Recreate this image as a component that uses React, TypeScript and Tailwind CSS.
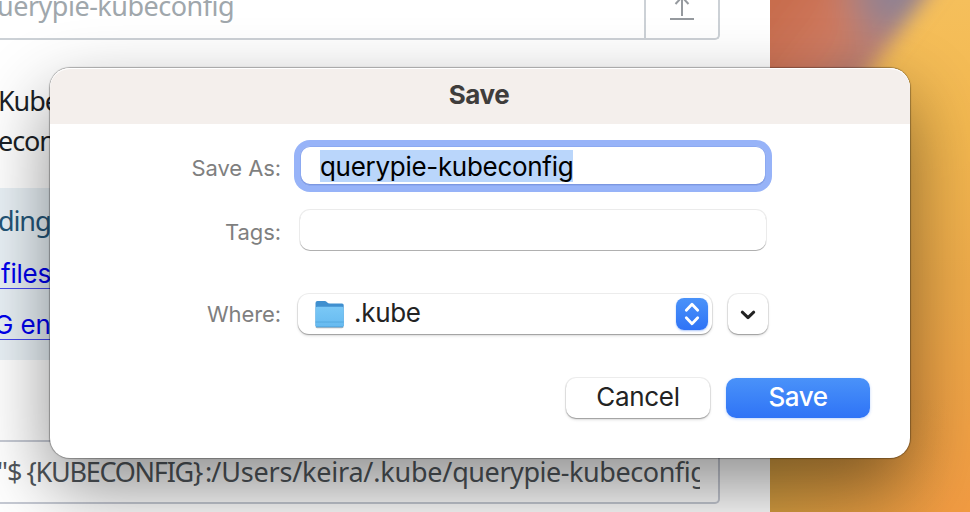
import React from "react";

function Wallpaper() {
  return (
    <svg className="absolute inset-0 h-full w-full" viewBox="0 0 970 512" aria-hidden="true">
      <defs>
        <linearGradient id="amber" x1="0" y1="0" x2="0" y2="1">
          <stop offset="0" stopColor="#f5bf5b" />
          <stop offset="0.25" stopColor="#f3b850" />
          <stop offset="0.55" stopColor="#eeab4a" />
          <stop offset="1" stopColor="#f19b42" />
        </linearGradient>
        <linearGradient id="ochre" x1="770" y1="0" x2="950" y2="0" gradientUnits="userSpaceOnUse">
          <stop offset="0" stopColor="#d49c40" />
          <stop offset="1" stopColor="#d49c40" stopOpacity="0" />
        </linearGradient>
        <linearGradient id="clay" x1="770" y1="20" x2="862" y2="91" gradientUnits="userSpaceOnUse">
          <stop offset="0" stopColor="#c86d4e" />
          <stop offset="0.5" stopColor="#cf7a60" />
          <stop offset="0.8" stopColor="#bf7f70" />
          <stop offset="1" stopColor="#b9857c" />
        </linearGradient>
        <radialGradient id="plum" cx="895" cy="-8" r="72" gradientUnits="userSpaceOnUse">
          <stop offset="0" stopColor="#8b8296" />
          <stop offset="0.4" stopColor="#948290" stopOpacity="0.8" />
          <stop offset="1" stopColor="#b9857c" stopOpacity="0" />
        </radialGradient>
        <filter id="soft" x="-20%" y="-20%" width="140%" height="140%">
          <feGaussianBlur stdDeviation="10" />
        </filter>
      </defs>
      <rect width="970" height="512" fill="url(#amber)" />
      <rect y="400" width="970" height="112" fill="url(#ochre)" />
      <g filter="url(#soft)">
        <path d="M700 -60 H967 L923 0 L876 62 L836 120 H700 Z" fill="url(#clay)" />
        <path d="M700 -60 H967 L923 0 L876 62 L836 120 H700 Z" fill="url(#plum)" />
      </g>
    </svg>
  );
}

function BrowserPage() {
  return (
    <div className="relative flex h-[512px] w-[770px] flex-col overflow-hidden bg-white font-['Noto_Sans',sans-serif] text-[27px] whitespace-nowrap">
      <div className="flex h-10 w-[720px] shrink-0 rounded-br-[5px] border-r-2 border-b-2 border-[#ccd1d6]">
        <div className="h-[38px] flex-1 overflow-hidden leading-[38px] tracking-[-0.5px] text-[#a0a7ac]">
          <div className="-mt-[13px] -ml-[3px]">uerypie-kubeconfig</div>
        </div>
        <div className="flex w-[74px] justify-center border-l-2 border-[#ccd1d6]">
          <svg className="h-[38px] w-9" viewBox="0 0 36 38" fill="none" stroke="#969a9f" strokeWidth="2">
            <path d="M6 19H30M18 16V-3M11.5 4L18 -3L24.5 4" />
          </svg>
        </div>
      </div>
      <div className="mt-[41px] -ml-[2px] h-[107px] leading-10 tracking-[-1.1px] text-[#1b1f26]">
        <div>Kube</div>
        <div>econ</div>
      </div>
      <div className="h-[172px] w-[720px] bg-[#e9f1f6] pt-[13px] text-[#245578]">
        <div className="-ml-[2px] h-[58px] leading-10 tracking-[-1.1px]">ding</div>
        <div className="font-[Inter,sans-serif] text-[26px] text-[#0000ee]">
          <div className="mb-[13px] flex h-[38px]">
            <span className="h-[30px] w-20 border-b border-[#0000ee]/70 pl-px leading-[30px] tracking-[-0.2px]">files</span>
          </div>
          <div className="flex h-[38px]">
            <span className="-ml-[6px] h-[30px] w-20 border-b border-[#0000ee]/70 leading-[30px] tracking-[-0.1px]">G en</span>
          </div>
        </div>
      </div>
      <div className="mt-20 h-16 w-[720px] rounded-r-[5px] border-y-2 border-r-2 border-[#c6cad4] pr-[18px]">
        <div className="overflow-hidden leading-[60px] tracking-[-0.4px] text-[#50565b]">
          <span className="-ml-[3px] tracking-[-1px]">"$</span>
          <span className="ml-[5px] tracking-[-1.25px]">{"{KUBECONFIG}"}</span>
          <span className="ml-[3px] tracking-[-0.9px]">:</span>
          <span className="tracking-[-0.2px]">/Users/keira/.kube/</span>
          <span className="tracking-[-0.45px]">querypie-kubeconfig</span>
        </div>
      </div>
    </div>
  );
}

function FolderIcon() {
  return (
    <svg className="h-8 w-8" viewBox="0 0 32 32">
      <defs>
        <linearGradient id="folder" x1="0" y1="0" x2="0" y2="1">
          <stop offset="0" stopColor="#7ac8f6" />
          <stop offset="1" stopColor="#66baf0" />
        </linearGradient>
      </defs>
      <path d="M1.5 28V5Q1.5 3 3.5 3H10.5Q12 3 13 4.2Q14 5.5 16 5.5H28Q29.7 5.5 29.7 7V28Z" fill="#3f8fcf" />
      <path d="M1.5 28.5H29.7Q29.7 30.3 28 30.3H3Q1.5 30.3 1.5 28.5Z" fill="#000" opacity="0.3" />
      <path d="M1.5 28V10.2Q1.5 8.7 3 8.7H28.2Q29.7 8.7 29.7 10.2V27.8Q29.7 29.3 28.2 29.3H3Q1.5 29.3 1.5 27.8Z" fill="url(#folder)" />
      <path d="M1.5 24H29.7M2 28.7H29" stroke="#4fa3db" strokeWidth="0.8" />
    </svg>
  );
}

function SaveDialog() {
  const control =
    "bg-white shadow-[0_0_0_1px_rgba(0,0,0,0.07),0_1px_1px_rgba(0,0,0,0.25),0_2px_3px_rgba(0,0,0,0.12)]";
  const label = "w-[231px] shrink-0 text-right text-[22px] tracking-[-0.1px] text-[#7f7f7f]";
  return (
    <div className="absolute top-[68px] left-[50px] flex h-[390px] w-[860px] flex-col rounded-[20px] bg-white font-[Inter,sans-serif] text-[#232323] shadow-[0_0_1px_1px_rgba(0,0,0,0.3),0_30px_72px_rgba(0,0,0,0.45)]">
      <div className="flex h-14 shrink-0 items-center justify-center rounded-t-[20px] bg-[#f4efec] pr-[2px] pb-[3px] text-[26px] font-bold tracking-[-0.4px] text-[#3f3d3c] shadow-[inset_0_1px_0_#fff]">
        Save
      </div>
      <div className="mt-[22px] flex h-10 items-center">
        <span className={label + " pt-1"}>Save As:</span>
        <div className="ml-[19px] flex h-10 w-[466px] items-center rounded-[10px] bg-white pl-5 shadow-[inset_0_0_0_1px_#8ca9f1,inset_0_-1px_0_1px_#7c97e0,0_0_0_6px_#97b3f8]">
          <span className="h-8 bg-[#bad6fb] text-[26px] leading-[34px] tracking-[-0.3px] text-black">querypie-kubeconfig</span>
        </div>
      </div>
      <div className="mt-6 flex h-10 items-center">
        <span className={label + " pt-1"}>Tags:</span>
        <div className="ml-[19px] h-10 w-[466px] rounded-[10px] bg-white shadow-[0_0_0_1px_rgba(0,0,0,0.08),0_1px_0_0_rgba(0,0,0,0.25)]" />
      </div>
      <div className="mt-11 flex h-10 items-center">
        <span className={label}>Where:</span>
        <div className={"ml-[17px] flex h-10 w-[414px] items-center rounded-[11px] pl-4 " + control}>
          <FolderIcon />
          <span className="ml-2 flex-1 pb-[3px] text-[26px] tracking-[-0.3px]">.kube</span>
          <div className="mr-1 flex h-8 w-8 items-center justify-center rounded-[8px] bg-gradient-to-b from-[#4a92f9] to-[#2f73f6] shadow-[0_1px_2px_rgba(47,115,246,0.4)]">
            <svg className="h-8 w-8" viewBox="0 0 32 32" fill="none" stroke="#fff" strokeWidth="2.8" strokeLinecap="round" strokeLinejoin="round">
              <path d="M10.3 12.2L16 6.3L21.7 12.2M10.3 19.8L16 25.7L21.7 19.8" />
            </svg>
          </div>
        </div>
        <div className={"ml-4 flex h-10 w-10 items-center justify-center rounded-[10px] " + control}>
          <svg className="h-10 w-10" viewBox="0 0 40 40" fill="none" stroke="#232323" strokeWidth="3" strokeLinecap="round" strokeLinejoin="round">
            <path d="M14.3 18.2L20 23.6L25.7 18.2" />
          </svg>
        </div>
      </div>
      <div className="mt-11 mr-10 flex h-10 justify-end gap-4 text-[26px]">
        <button className={"h-10 w-36 rounded-[10px] pb-0.5 leading-[38px] tracking-[-0.3px] " + control}>Cancel</button>
        <button className="h-10 w-36 rounded-[10px] bg-gradient-to-b from-[#4a92f9] to-[#2f73f6] pb-0.5 leading-[38px] font-medium tracking-[-0.5px] text-white shadow-[0_1px_3px_rgba(47,115,246,0.3)]">
          Save
        </button>
      </div>
    </div>
  );
}

export default function App() {
  return (
    <main className="relative h-[512px] w-[970px] overflow-hidden">
      <Wallpaper />
      <BrowserPage />
      <SaveDialog />
    </main>
  );
}
